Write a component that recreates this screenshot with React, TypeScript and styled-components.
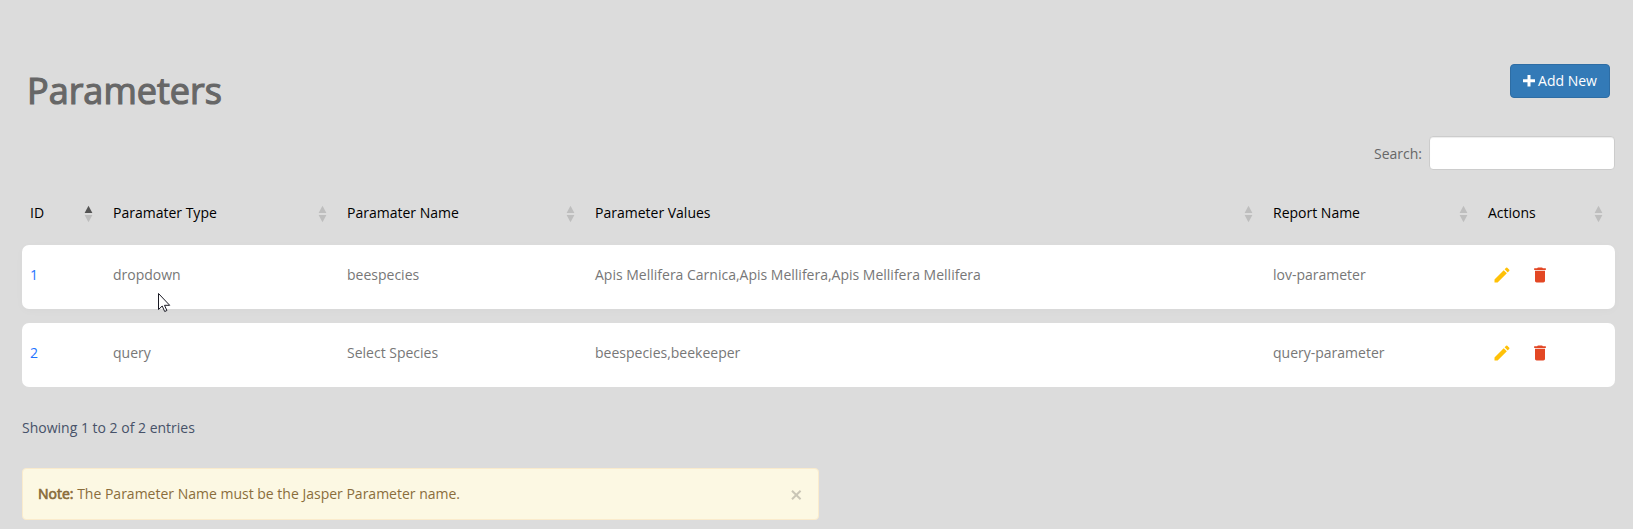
import React from "react";
import styled, { createGlobalStyle } from "styled-components";

const GlobalStyle = createGlobalStyle`
  * { box-sizing: border-box; }
  body {
    margin: 0;
    background: #dcdcdc;
    color: #676767;
    font: 400 14px/20px "Open Sans", sans-serif;
    overflow: hidden;
  }
`;

const Page = styled.main`
  position: relative;
  height: 529px;
  padding: 64px 18px 0 22px;
`;

const Header = styled.header`
  display: flex;
  justify-content: space-between;
  align-items: flex-start;
  height: 72px;
  padding: 0 5px;
`;

const Title = styled.h1`
  margin: 7px 0 0;
  font-size: 36px;
  font-weight: 400;
  line-height: 40px;
  letter-spacing: 0;
  -webkit-text-stroke: 1.2px #676767;
`;

const AddButton = styled.button`
  display: flex;
  align-items: center;
  justify-content: center;
  gap: 3px;
  width: 100px;
  height: 34px;
  padding: 0;
  border: 1px solid #2e6da4;
  border-radius: 4px;
  background: #337ab7;
  color: #fff;
  font: inherit;
  white-space: nowrap;
`;

const SearchBar = styled.label`
  display: flex;
  justify-content: flex-end;
  align-items: center;
  gap: 7px;
  height: 34px;
`;

const SearchText = styled.span`
  padding-top: 2px;
`;

const SearchInput = styled.input`
  width: 186px;
  height: 34px;
  border: 1px solid #ccc;
  border-radius: 4px;
  background: #fff;
  box-shadow: inset 0 1px 1px rgba(0, 0, 0, 0.075);
  outline: none;
`;

const columns = "83px 234px 248px 678px 215px 135px";

const HeadRow = styled.div`
  display: grid;
  grid-template-columns: ${columns};
  align-items: center;
  height: 34px;
  margin: 26px 0 15px;
`;

const HeadCell = styled.div`
  display: flex;
  align-items: center;
  justify-content: space-between;
  padding: 0 12px 0 8px;
  color: #000;
`;

const SortMark = styled.svg`
  display: block;
  width: 10px;
  height: 18px;
  margin-top: 2px;
`;

const Row = styled.div<{ $raised?: boolean }>`
  display: grid;
  grid-template-columns: ${columns};
  height: 64px;
  margin-bottom: 14px;
  border-radius: 7px;
  background: #fff;
  color: #777;
  box-shadow: ${(p) => (p.$raised ? "0 2px 10px rgba(0, 0, 0, 0.025)" : "none")};
`;

const Cell = styled.div<{ $link?: boolean }>`
  padding: 20px 8px 0;
  white-space: nowrap;
  color: ${(p) => (p.$link ? "#1f74ff" : "inherit")};
`;

const Actions = styled.div`
  display: flex;
  gap: 18px;
  padding: 20px 0 0 12px;
`;

const ActionIcon = styled.svg`
  width: 20px;
  height: 20px;
  display: block;
`;

const Info = styled.p`
  margin: 31px 0 0;
  color: #475269;
`;

const Note = styled.aside`
  display: flex;
  justify-content: space-between;
  align-items: center;
  width: 797px;
  height: 52px;
  margin-top: 30px;
  padding: 0 16px 0 15px;
  border: 1px solid #faebcc;
  border-radius: 4px;
  background: #fcf8e3;
  color: #8a6d3b;
`;

const NoteLabel = styled.strong`
  font-weight: 400;
  -webkit-text-stroke: 0.7px #8a6d3b;
`;

const CloseMark = styled.svg`
  display: block;
  margin-top: 1px;
`;

const Cursor = styled.svg`
  position: absolute;
  left: 157px;
  top: 292px;
`;

const SortIcon = ({ active }: { active?: boolean }) => (
  <SortMark viewBox="0 0 10 18">
    <path d="M5.5 0.8L9.4 8H1.6Z" fill={active ? "#545454" : "#bebebe"} />
    <path d="M5.5 17.2L9.4 10H1.6Z" fill="#bebebe" />
  </SortMark>
);

const heads = ["ID", "Paramater Type", "Paramater Name", "Parameter Values", "Report Name", "Actions"];
const rows = [
  ["1", "dropdown", "beespecies", "Apis Mellifera Carnica,Apis Mellifera,Apis Mellifera Mellifera", "lov-parameter"],
  ["2", "query", "Select Species", "beespecies,beekeeper", "query-parameter"],
];

export default function App() {
  return (
    <Page>
      <GlobalStyle />
      <Header>
        <Title>Parameters</Title>
        <AddButton>
          <svg width="12" height="12" viewBox="0 0 12 12">
            <path d="M4.5 0h3v4.2H12v3H7.5v4.3h-3V7.2H0v-3h4.5z" fill="#fff" />
          </svg>
          Add New
        </AddButton>
      </Header>
      <SearchBar>
        <SearchText>Search:</SearchText>
        <SearchInput />
      </SearchBar>
      <HeadRow>
        {heads.map((h, i) => (
          <HeadCell key={h}>
            {h}
            <SortIcon active={i === 0} />
          </HeadCell>
        ))}
      </HeadRow>
      {rows.map((r, i) => (
        <Row key={r[0]} $raised={i === 0}>
          {r.map((c, j) => (
            <Cell key={j} $link={j === 0}>{c}</Cell>
          ))}
          <Actions>
            <ActionIcon viewBox="0 0 24 24" fill="#ffc107">
              <path d="M3 17.25V21h3.75L17.81 9.94l-3.75-3.75L3 17.25zM20.71 7.04a1 1 0 0 0 0-1.41l-2.34-2.34a1 1 0 0 0-1.41 0l-1.83 1.83 3.75 3.75 1.83-1.83z" />
            </ActionIcon>
            <ActionIcon viewBox="0 0 24 24" fill="#e34724">
              <path d="M6 19c0 1.1.9 2 2 2h8c1.1 0 2-.9 2-2V7H6v12zM19 4h-3.5l-1-1h-5l-1 1H5v2h14V4z" />
            </ActionIcon>
          </Actions>
        </Row>
      ))}
      <Info>Showing 1 to 2 of 2 entries</Info>
      <Note>
        <span>
          <NoteLabel>Note:</NoteLabel> The Parameter Name must be the Jasper Parameter name.
        </span>
        <CloseMark width="12" height="12" viewBox="0 0 12 12">
          <path d="M2 1.7l8.6 8.6M10.6 1.7l-8.6 8.6" stroke="#cac6b6" strokeWidth="2" />
        </CloseMark>
      </Note>
      <Cursor width="14" height="21" viewBox="0 0 14 21">
        <path d="M1.5 1.5v16l3.7-3.5 2.5 5.5 2.2-1-2.4-5.2h5.2z" fill="#fff" stroke="#1a1a24" />
      </Cursor>
    </Page>
  );
}
